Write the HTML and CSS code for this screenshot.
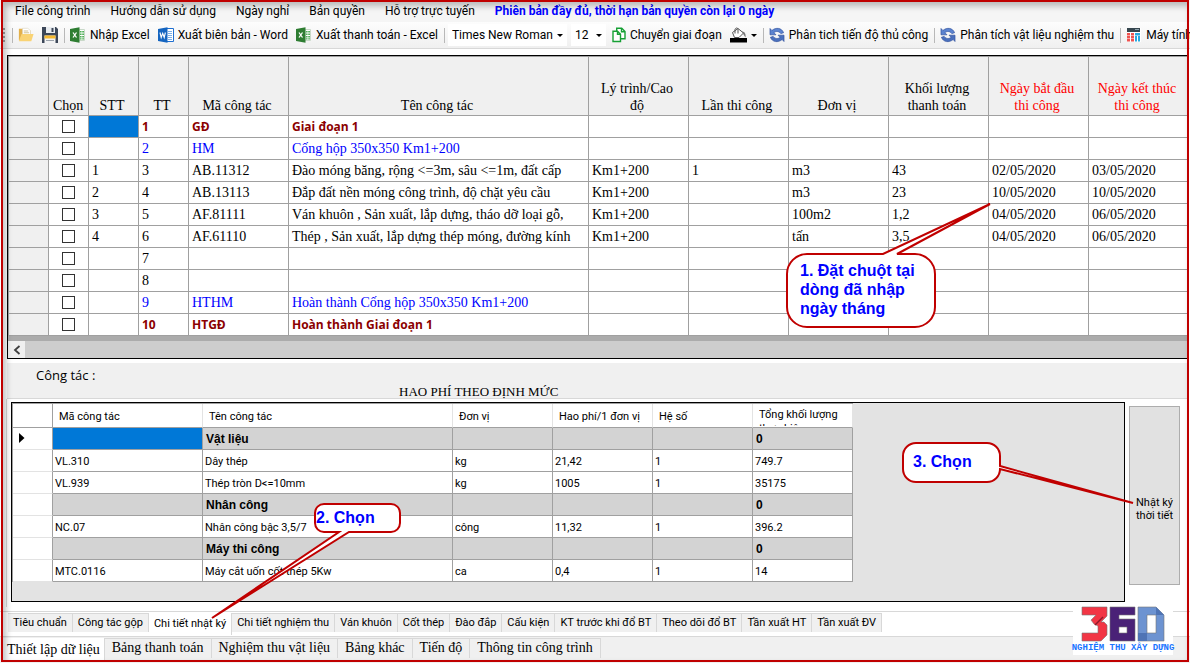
FILE: index.html
```html
<!DOCTYPE html>
<html lang="vi">
<head>
  <meta charset="UTF-8">
  <meta name="viewport" content="width=device-width, initial-scale=1.0">
  <title>Nghiệm thu xây dựng 360</title>
  <link rel="stylesheet" href="styles.css">
</head>
<body>

  <!-- Biểu tượng dùng chung -->
  <svg class="defs" width="0" height="0" aria-hidden="true">
    <symbol id="icon-excel" viewBox="0 0 16 16">
      <path fill="#fff" stroke="#c8d8c8" d="M9 2.500h5.500v11H9z"/>
      <path fill="#4fae58" d="M10 4h1.600v1.500H10zM12.200 4h1.800v1.500h-1.800zM10 6.500h1.600V8H10zM12.200 6.500h1.800V8h-1.800zM10 9h1.600v1.500H10zM12.200 9h1.800v1.500h-1.800zM10 11.300h1.600v1.300H10zM12.200 11.300h1.800v1.300h-1.800z"/>
      <path fill="#2e7d32" d="M0 2l9.500-1.800v15.600L0 14z"/>
      <path fill="none" stroke="#fff" stroke-width="1.300" d="M3 5.500l3.500 5M6.500 5.500L3 10.500"/>
    </symbol>
    <symbol id="icon-refresh" viewBox="0 0 16 16">
      <path fill="#5b83d0" stroke="#35559f" stroke-width=".7" d="M1 1.500v6.300h6L4.900 5.700C7 3.900 10 4.100 11.800 6.600l2.800-.9C12.600.8 7 .0 2.900 3.500z"/>
      <path fill="#4a70bd" stroke="#35559f" stroke-width=".7" d="M15 14.500V8.200H9l2.100 2.100C9 12.100 6 11.900 4.200 9.400l-2.800.9c2 4.900 7.600 5.700 11.700 2.200z"/>
    </symbol>
  </svg>

  <div class="app">
    <nav class="menu">
      <a href="#">File công trình</a>
      <a href="#">Hướng dẫn sử dụng</a>
      <a href="#">Ngày nghỉ</a>
      <a href="#">Bản quyền</a>
      <a href="#">Hỗ trợ trực tuyến</a>
      <a href="#" class="license">Phiên bản đầy đủ, thời hạn bản quyền còn lại 0 ngày</a>
    </nav>

    <div class="toolbar">
      <span class="grip"></span>
      <span class="sep"></span>
      <button class="tool" aria-label="Mở">
        <svg width="16" height="16" viewBox="0 0 18 16"><path fill="#e3b04a" d="M1 1h5l1 2h7v11H1z"/><path fill="#fff" stroke="#d8d0b8" stroke-width=".6" d="M5 .5h6L14 3v7H5z"/><path stroke="#c9b98a" d="M6.500 3.500h5M6.500 5.500h6"/><path fill="#f9d374" d="M4 7h13.500L15 15H1z"/></svg>
      </button>
      <button class="tool" aria-label="Lưu">
        <svg width="16" height="16" viewBox="0 0 16 16"><path fill="#3c4758" d="M0 0h14l2 2v14H0z"/><path fill="#e8ecf0" d="M4 0h9v6H4z"/><path fill="#3c4758" d="M9.500 1h2v4h-2z"/><path fill="#f3f3f3" d="M2.500 8.500h11V16h-11z"/><path fill="#f5b92f" d="M2.500 8.500h11v3h-11z"/><path stroke="#9aa2ab" d="M4 13.500h8"/></svg>
      </button>
      <span class="sep"></span>
      <button class="tool"><svg width="16" height="16"><use href="#icon-excel"/></svg>Nhập Excel</button>
      <button class="tool">
        <svg width="16" height="16" viewBox="0 0 16 16"><path fill="#fff" stroke="#1f6fd0" d="M8 1.500h7.500v13H8z"/><path stroke="#79aee8" d="M10 4.500h4M10 6.500h4M10 8.500h4M10 10.500h4M10 12.500h4"/><path fill="#1565c0" d="M0 2l9.500-1.800v15.600L0 14z"/><path fill="none" stroke="#fff" stroke-width="1.100" d="M2 5.500l1.200 5 1.500-4.200 1.500 4.200 1.200-5"/></svg>
        Xuất biên bản - Word
      </button>
      <button class="tool"><svg width="16" height="16"><use href="#icon-excel"/></svg>Xuất thanh toán - Excel</button>
      <span class="sep"></span>
      <span class="combo combo-font">
        <select aria-label="Phông chữ"><option>Times New Roman</option></select>
      </span>
      <span class="combo combo-size">
        <select aria-label="Cỡ chữ"><option>12</option></select>
      </span>
      <button class="tool">
        <svg width="14" height="16" viewBox="0 0 14 16"><path fill="#fff" stroke="#16a034" stroke-width="1.400" d="M4.700 1.200h5l3.300 3.300v7.300H4.700z"/><path fill="#fff" stroke="#16a034" stroke-width="1.400" d="M1 4.200h4.500l3 3v7.300H1z"/><path fill="none" stroke="#16a034" stroke-width="1.400" d="M5.500 4.200v3h3M9.500 1.200v3.500H13"/></svg>
        Chuyển giai đoạn
      </button>
      <button class="tool arrow" aria-label="Màu nền">
        <svg width="17" height="16" viewBox="0 0 17 16"><path fill="#fff" stroke="#555" d="M2.500 5.500L8 1.500l5.500 4.500L9 10.500H4.500z"/><path fill="none" stroke="#555" d="M5 6.500V2.500C5.500.5 8 .5 8 2.500v4"/><path fill="#777" d="M12 4.500c3 0 4 3 3.500 6l-2-3z"/><path d="M0 11h17v4.500H0z"/></svg>
      </button>
      <span class="sep"></span>
      <button class="tool"><svg width="16" height="16"><use href="#icon-refresh"/></svg>Phân tich tiến độ thủ công</button>
      <span class="sep"></span>
      <button class="tool"><svg width="16" height="16"><use href="#icon-refresh"/></svg>Phân tích vật liệu nghiệm thu</button>
      <span class="sep"></span>
      <button class="tool">
        <svg width="16" height="16" viewBox="0 0 16 16"><path fill="#fff" d="M1 1h14v14H1z"/><path fill="#37474f" d="M1 1h13v4H1z"/><path fill="#90a4ae" d="M9 2h4v1H9z"/><path fill="#ef5350" d="M1 6h3v2.500H1zM5 6h3v2.500H5zM1 9h3v2.500H1zM5 9h3v2.500H5zM1 12h3v2.500H1zM5 12h3v2.500H5z"/><path fill="#29a9df" d="M9 6h5v2.500H9zM9 9h2v5.500H9zM12 9h2v5.500h-2z"/></svg>
        Máy tính
      </button>
    </div>

    <div class="work-panel">
      <table class="work-table">
        <colgroup>
          <col class="w40"><col class="w40"><col class="w50"><col class="w50"><col class="w100"><col>
          <col class="w100"><col class="w100"><col class="w100"><col class="w100"><col class="w100"><col class="w100">
        </colgroup>
        <thead>
          <tr>
            <th></th><th>Chọn</th><th>STT</th><th>TT</th><th>Mã công tác</th><th>Tên công tác</th>
            <th>Lý trình/Cao độ</th><th>Lần thi công</th><th>Đơn vị</th><th>Khối lượng thanh toán</th>
            <th class="red">Ngày bắt đầu thi công</th><th class="red">Ngày kết thúc thi công</th>
          </tr>
        </thead>
        <tbody>
          <tr class="stage"><th></th><td><input type="checkbox" aria-label="Chọn 1"></td><td class="selected"></td><td>1</td><td>GĐ</td><td>Giai đoạn 1</td><td></td><td></td><td></td><td></td><td></td><td></td></tr>
          <tr class="item"><th></th><td><input type="checkbox" aria-label="Chọn 2"></td><td></td><td>2</td><td>HM</td><td>Cống hộp 350x350 Km1+200</td><td></td><td></td><td></td><td></td><td></td><td></td></tr>
          <tr><th></th><td><input type="checkbox" aria-label="Chọn 3"></td><td>1</td><td>3</td><td>AB.11312</td><td>Đào móng băng, rộng &lt;=3m, sâu &lt;=1m, đất cấp</td><td>Km1+200</td><td>1</td><td>m3</td><td>43</td><td>02/05/2020</td><td>03/05/2020</td></tr>
          <tr><th></th><td><input type="checkbox" aria-label="Chọn 4"></td><td>2</td><td>4</td><td>AB.13113</td><td>Đắp đất nền móng công trình, độ chặt yêu cầu</td><td>Km1+200</td><td></td><td>m3</td><td>23</td><td>10/05/2020</td><td>10/05/2020</td></tr>
          <tr><th></th><td><input type="checkbox" aria-label="Chọn 5"></td><td>3</td><td>5</td><td>AF.81111</td><td>Ván khuôn , Sản xuất, lắp dựng, tháo dỡ loại gỗ,</td><td>Km1+200</td><td></td><td>100m2</td><td>1,2</td><td>04/05/2020</td><td>06/05/2020</td></tr>
          <tr><th></th><td><input type="checkbox" aria-label="Chọn 6"></td><td>4</td><td>6</td><td>AF.61110</td><td>Thép , Sản xuất, lắp dựng thép móng, đường kính</td><td>Km1+200</td><td></td><td>tấn</td><td>3,5</td><td>04/05/2020</td><td>06/05/2020</td></tr>
          <tr><th></th><td><input type="checkbox" aria-label="Chọn 7"></td><td></td><td>7</td><td></td><td></td><td></td><td></td><td></td><td></td><td></td><td></td></tr>
          <tr><th></th><td><input type="checkbox" aria-label="Chọn 8"></td><td></td><td>8</td><td></td><td></td><td></td><td></td><td></td><td></td><td></td><td></td></tr>
          <tr class="item"><th></th><td><input type="checkbox" aria-label="Chọn 9"></td><td></td><td>9</td><td>HTHM</td><td>Hoàn thành Cống hộp 350x350 Km1+200</td><td></td><td></td><td></td><td></td><td></td><td></td></tr>
          <tr class="stage"><th></th><td><input type="checkbox" aria-label="Chọn 10"></td><td></td><td>10</td><td>HTGĐ</td><td>Hoàn thành Giai đoạn 1</td><td></td><td></td><td></td><td></td><td></td><td></td></tr>
        </tbody>
      </table>
      <div class="scrollbar">
        <button class="scroll-left" aria-label="Cuộn trái">
          <svg width="8" height="10" viewBox="0 0 8 10"><path fill="none" stroke="#404040" stroke-width="1.800" d="M6.500 1L2 5l4.500 4"/></svg>
        </button>
      </div>
    </div>

    <div class="detail">
      <div class="detail-head">
        <p>Công tác :</p>
        <h2>HAO PHÍ THEO ĐỊNH MỨC</h2>
      </div>
      <div class="detail-body">
        <div class="norm-box">
          <table class="norm-table">
            <colgroup>
              <col class="w40"><col class="w150"><col class="w250"><col class="w100"><col class="w100"><col class="w100"><col class="w100">
            </colgroup>
            <thead>
              <tr><th></th><th>Mã công tác</th><th>Tên công tác</th><th>Đơn vị</th><th>Hao phí/1 đơn vị</th><th>Hệ số</th><th><div class="clip">Tổng khối lượng thực hiện</div></th></tr>
            </thead>
            <tbody>
              <tr class="group"><th><svg width="6" height="10" viewBox="0 0 6 10"><path d="M0 0l5.500 5L0 10z"/></svg></th><td class="selected"></td><td>Vật liệu</td><td></td><td></td><td></td><td>0</td></tr>
              <tr><th></th><td>VL.310</td><td>Dây thép</td><td>kg</td><td>21,42</td><td>1</td><td>749.7</td></tr>
              <tr><th></th><td>VL.939</td><td>Thép tròn D&lt;=10mm</td><td>kg</td><td>1005</td><td>1</td><td>35175</td></tr>
              <tr class="group"><th></th><td></td><td>Nhân công</td><td></td><td></td><td></td><td>0</td></tr>
              <tr><th></th><td>NC.07</td><td>Nhân công bậc 3,5/7</td><td>công</td><td>11,32</td><td>1</td><td>396.2</td></tr>
              <tr class="group"><th></th><td></td><td>Máy thi công</td><td></td><td></td><td></td><td>0</td></tr>
              <tr><th></th><td>MTC.0116</td><td>Máy cắt uốn cốt thép 5Kw</td><td>ca</td><td>0,4</td><td>1</td><td>14</td></tr>
            </tbody>
          </table>
        </div>
        <button class="weather">Nhật ký thời tiết</button>
      </div>
    </div>

    <div class="tabs tabs-detail">
      <button>Tiêu chuẩn</button>
      <button>Công tác gộp</button>
      <button class="active">Chi tiết nhật ký</button>
      <button>Chi tiết nghiệm thu</button>
      <button>Ván khuôn</button>
      <button>Cốt thép</button>
      <button>Đào đắp</button>
      <button>Cấu kiện</button>
      <button>KT trước khi đổ BT</button>
      <button>Theo dõi đổ BT</button>
      <button>Tần xuất HT</button>
      <button>Tần xuất ĐV</button>
    </div>

    <div class="tabs tabs-main">
      <button class="active">Thiết lập dữ liệu</button>
      <button>Bảng thanh toán</button>
      <button>Nghiệm thu vật liệu</button>
      <button>Bảng khác</button>
      <button>Tiến độ</button>
      <button>Thông tin công trình</button>
    </div>

    <div class="logo">
      <svg width="84" height="36" viewBox="0 0 84 36">
        <g stroke="#777" stroke-width=".6">
          <path fill="#f23645" d="M1 1h25v9l-6 6h3l3 3v10l-6 6H1v-8h16v-7l-4-2-3-4 5-5H1z"/>
          <path fill="#4a2277" d="M29 1h25v8H38v4h16v22H29zM38 21v6h8v-6z" fill-rule="evenodd"/>
          <path fill="#6d93d1" d="M57 1h18l8 8v26H57zM66 9v18h9V9z" fill-rule="evenodd"/>
        </g>
        <path stroke="#8c1a2a" stroke-width="1.500" d="M14 19l8-8"/>
        <path fill="#4f74b5" d="M57 27h9v8h-9zM75 1l8 8h-8z"/>
      </svg>
      <span>NGHIỆM THU XÂY DỰNG</span>
    </div>

    <!-- Chú thích hướng dẫn -->
    <div class="callout callout-1">
      <svg width="206" height="126" viewBox="0 0 206 126"><path d="M21 51H97L204 1L111 51H129A20 20 0 0 1 149 71V104A20 20 0 0 1 129 124H21A20 20 0 0 1 1 104V71A20 20 0 0 1 21 51Z"/></svg>
      <p>1. Đặt chuột tại dòng đã nhập ngày tháng</p>
    </div>
    <div class="callout callout-2">
      <svg width="194" height="120" viewBox="0 0 194 120"><path d="M114 2H181A9 9 0 0 1 190 11V21A9 9 0 0 1 181 30H139L2 116L129 30H114A9 9 0 0 1 105 21V11A9 9 0 0 1 114 2Z"/></svg>
      <p>2. Chọn</p>
    </div>
    <div class="callout callout-3">
      <svg width="236" height="66" viewBox="0 0 236 66"><path d="M15 2H86A13 13 0 0 1 99 15V25L232 62L99 28A13 13 0 0 1 86 41H15A13 13 0 0 1 2 28V15A13 13 0 0 1 15 2Z"/></svg>
      <p>3. Chọn</p>
    </div>

    <div class="frame"></div>
  </div>

</body>
</html>
```
FILE: styles.css
```css
* {
  margin: 0;
  padding: 0;
  box-sizing: border-box;
}

body {
  font-family: Roboto, sans-serif;
  font-size: 12px;
  color: #000;
  background-color: #fff;
}

button,
select,
input {
  font: inherit;
  color: inherit;
  border: none;
  background: none;
}

.defs {
  position: absolute;
}

.app {
  position: relative;
  min-width: 1190px;
  min-height: 100vh;
  overflow: hidden;
  display: flex;
  flex-direction: column;
}

.frame {
  position: absolute;
  inset: 0 1px 1px 1px;
  border: 2px solid #c00000;
  box-shadow: inset 3px 4px 6px rgba(0, 0, 0, 0.25);
  pointer-events: none;
}

/* Thanh menu */
.menu {
  display: flex;
  gap: 20px;
  height: 22px;
  padding: 0 15px;
  background-color: #f5f5f5;
  line-height: 22px;
}

.menu a {
  color: #000;
  text-decoration: none;
  white-space: nowrap;
}

.menu .license {
  color: #0000ff;
  font-weight: bold;
}

/* Thanh công cụ */
.toolbar {
  display: flex;
  align-items: center;
  height: 27px;
  padding-left: 3px;
  background: linear-gradient(#fdfdfd, #f0f0f0);
  border-bottom: 1px solid #d8d8d8;
  white-space: nowrap;
  overflow: hidden;
}

.grip {
  width: 2px;
  height: 14px;
  margin-right: 5px;
  border-left: 2px dotted #a0a0a0;
}

.sep {
  flex: none;
  width: 1px;
  height: 15px;
  margin: 0 1px 0 2px;
  background-color: #b8b8b8;
}

.tool {
  flex: none;
  display: flex;
  align-items: center;
  gap: 4px;
  padding: 0 4px;
}

.arrow::after,
.combo::after {
  content: '';
  border: 3px solid transparent;
  border-top-color: #000;
  border-bottom: none;
}

.combo {
  flex: none;
  display: flex;
  align-items: center;
  height: 22px;
  margin: 0 2px;
  padding: 0 4px;
  background-color: #fff;
}

.combo select {
  flex: 1;
  appearance: none;
}

.combo-font {
  width: 119px;
}

.combo-size {
  width: 35px;
}

/* Bảng công tác */
.work-panel {
  margin: 6px 1px 0 7px;
  border: 1px solid #000;
  border-right: none;
}

.work-table,
.norm-table {
  table-layout: fixed;
  border-collapse: separate;
  border-spacing: 0;
  border-top: 1px solid #a0a0a0;
  border-left: 1px solid #a0a0a0;
}

.work-table {
  width: 100%;
  font-family: 'Liberation Serif', serif;
  font-size: 14px;
}

.w40 {
  width: 40px;
}

.w50 {
  width: 50px;
}

.w100 {
  width: 100px;
}

.w150 {
  width: 150px;
}

.w250 {
  width: 250px;
}

th,
td {
  height: 22px;
  border-right: 1px solid #a0a0a0;
  border-bottom: 1px solid #a0a0a0;
  line-height: 17px;
  text-align: left;
  white-space: nowrap;
  overflow: hidden;
}

td {
  padding: 0 3px;
  background-color: #fff;
}

.work-table th {
  background-color: #f0f0f0;
  font-weight: normal;
}

.work-table thead th {
  height: 59px;
  padding: 0 7px 1px 4px;
  text-align: center;
  vertical-align: bottom;
  white-space: normal;
}

.work-table .red {
  color: #ff0000;
}

.stage td {
  font-family: 'Open Sans', sans-serif;
  font-size: 12px;
  font-weight: bold;
  color: #8b0000;
}

.item td {
  color: #0000ff;
}

.work-table .selected,
.norm-table .group .selected {
  background-color: #0078d7;
}

input[type="checkbox"] {
  appearance: none;
  display: block;
  width: 13px;
  height: 13px;
  margin: 0 auto;
  border: 1px solid #333;
  background-color: #fff;
}

.scrollbar {
  height: 22px;
  border-top: 5px solid #ababab;
  background-color: #cdcdcd;
}

.scroll-left {
  display: flex;
  align-items: center;
  justify-content: center;
  width: 17px;
  height: 17px;
  background-color: #f0f0f0;
}

/* Chi tiết hao phí */
.detail {
  margin: 4px 1px 0 7px;
}

.detail-head {
  height: 36px;
  padding: 3px 29px 0;
  background-color: #f0f0f0;
  border-bottom: 1px solid #d8d8d8;
}

.detail-head p {
  font-family: 'Open Sans', sans-serif;
  font-size: 13px;
  line-height: 18px;
}

.detail-head h2 {
  padding-left: 363px;
  font-family: 'Liberation Serif', serif;
  font-size: 13px;
  font-weight: normal;
  line-height: 15px;
}

.detail-body {
  display: flex;
  gap: 4px;
  padding: 3px 9px 5px 4px;
  border-left: 1px solid #d8d8d8;
  margin-left: -1px;
}

.norm-box {
  flex: 1;
  height: 200px;
  border: 1px solid #000;
  background-color: #e3e3e3;
}

.norm-table {
  width: 841px;
  font-size: 11px;
}

.norm-table th {
  padding: 2px 6px 0;
  background-color: #fff;
  border-bottom-color: #e3e3e3;
  font-weight: normal;
}

.norm-table thead th {
  height: 24px;
  border-right-color: #e3e3e3;
  border-bottom-color: #a0a0a0;
}

.norm-table th:first-child {
  border-right-color: #a0a0a0;
}

.norm-table td {
  padding: 2px 2px 0;
}

.norm-table .group td {
  padding: 2px 3px 0;
  background-color: #d3d3d3;
  font-family: 'Liberation Sans', sans-serif;
  font-size: 12px;
  font-weight: bold;
}

.clip {
  height: 18px;
  line-height: 14px;
  white-space: normal;
  overflow: hidden;
}

.weather {
  width: 51px;
  height: 179px;
  margin-top: 4px;
  padding-top: 26px;
  border: 1px solid #adadad;
  background-color: #e1e1e1;
  font-size: 11px;
  line-height: 13px;
}

/* Các thẻ phía dưới */
.tabs {
  display: flex;
  align-items: flex-start;
  border-top: 1px solid #d8d8d8;
}

.tabs button {
  background-color: #f0f0f0;
  border: 1px solid #d8d8d8;
  border-width: 1px 1px 0 0;
  white-space: nowrap;
}

.tabs .active {
  background-color: #fff;
  border-top: none;
}

.tabs-detail {
  height: 25px;
  margin-top: 4px;
  padding: 1px 0 0 8px;
  font-size: 11px;
}

.tabs-detail button {
  height: 19px;
  padding: 0 5px 2px;
  line-height: 15px;
}

.tabs-detail .active {
  height: 22px;
}

.tabs-main {
  flex: 1;
  padding: 1px 0 0 3px;
  background-color: #f0f0f0;
  font-family: 'Liberation Serif', serif;
  font-size: 14px;
}

.tabs-main button {
  height: 20px;
  padding: 0 7px 2px;
  line-height: 16px;
}

.tabs-main .active {
  height: 23px;
  padding: 0 4px;
}

.logo {
  position: absolute;
  right: 17px;
  bottom: 8px;
  display: flex;
  flex-direction: column;
  align-items: center;
  width: 100px;
  padding-top: 1px;
  background-color: #fff;
  color: #1a75ff;
  font-family: 'Liberation Mono', monospace;
  font-size: 9px;
  font-weight: bold;
  line-height: 13px;
  white-space: nowrap;
}

/* Chú thích */
.callout {
  position: absolute;
  color: #0000ff;
  font-family: 'Liberation Sans', sans-serif;
  font-size: 16px;
  font-weight: bold;
  line-height: 19px;
}

.callout svg {
  display: block;
}

.callout path {
  fill: #fff;
  stroke: #c00000;
  stroke-width: 2;
}

.callout p {
  position: absolute;
}

.callout-1 {
  left: 786px;
  top: 203px;
}

.callout-1 p {
  left: 14px;
  top: 58px;
  width: 120px;
}

.callout-2 {
  left: 210px;
  top: 502px;
}

.callout-2 p {
  left: 106px;
  top: 6px;
}

.callout-3 {
  left: 901px;
  top: 441px;
}

.callout-3 p {
  left: 12px;
  top: 11px;
}
```
